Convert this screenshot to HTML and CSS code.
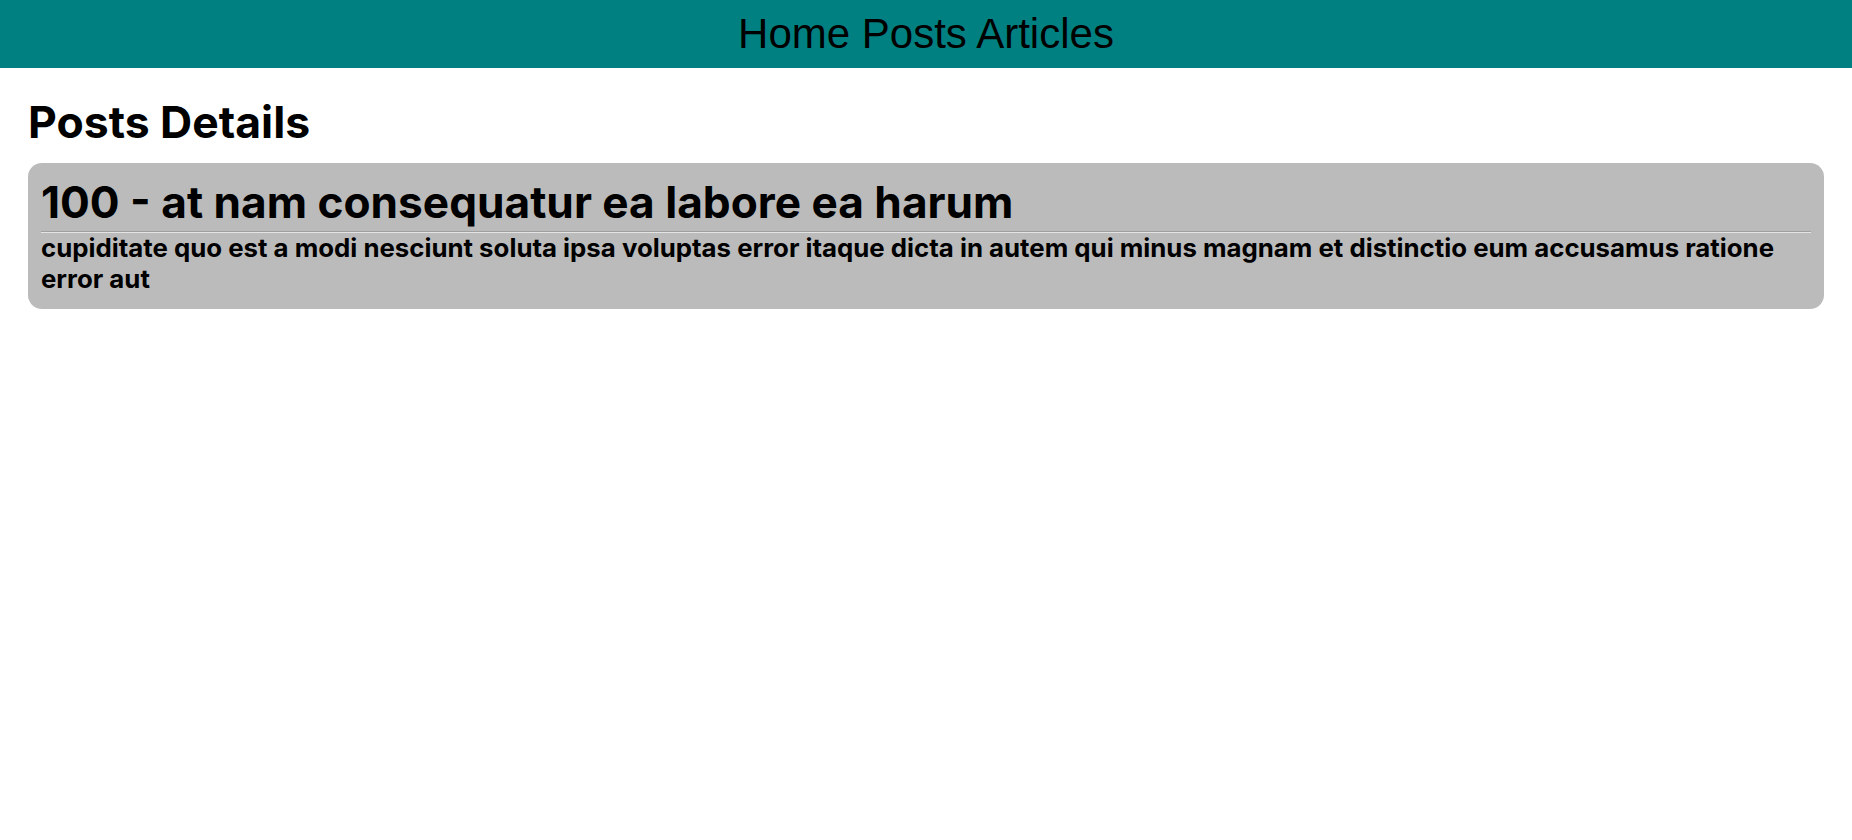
FILE: index.html
```html
<!DOCTYPE html>
<html lang="en">
<head>
<meta charset="utf-8">
<title>Posts Details</title>
<link rel="stylesheet" href="styles.css">
</head>
<body>
<header class="topbar">
  <nav class="nav">
    <a class="nav-link" href="#">Home</a>
    <a class="nav-link" href="#">Posts</a>
    <a class="nav-link" href="#">Articles</a>
  </nav>
</header>
<main class="page">
  <h1 class="page-title">Posts Details</h1>
  <article class="post-card">
    <h2 class="post-title">100 - at nam consequatur ea labore ea harum</h2>
    <hr class="post-rule">
    <p class="post-body">cupiditate quo est a modi nesciunt soluta ipsa voluptas error itaque dicta in autem qui minus magnam et distinctio eum accusamus ratione error aut</p>
  </article>
</main>
</body>
</html>
```
FILE: styles.css
```css
* { box-sizing: border-box; }
html, body { margin: 0; padding: 0; background: #ffffff; }
body { font-family: Inter, "Noto Sans", sans-serif; color: #000; }

.topbar {
  background: #008080;
  height: 68px;
  padding-top: 10px;
  text-align: center;
}
.nav {
  font-family: "Liberation Sans", Arial, sans-serif;
  font-size: 42px;
  line-height: 48px;
}
.nav-link { color: #000; text-decoration: none; }

.page { padding: 27px 28px 0; }

.page-title {
  margin: 0 0 14px;
  font-size: 44.5px;
  font-weight: 700;
  line-height: 54px;
}

.post-card {
  background: #bbbbbb;
  border-radius: 14px;
  padding: 13px 13px 15px;
}
.post-title {
  margin: 0 0 2px;
  font-size: 44.2px;
  font-weight: 700;
  line-height: 53px;
}
.post-rule {
  margin: 0;
  border: 0;
  border-top: 1px solid #a0a0a0;
  border-bottom: 1px solid #e4e4e4;
}
.post-body {
  margin: 0;
  font-size: 25.8px;
  font-weight: 700;
  line-height: 30.5px;
}
```
